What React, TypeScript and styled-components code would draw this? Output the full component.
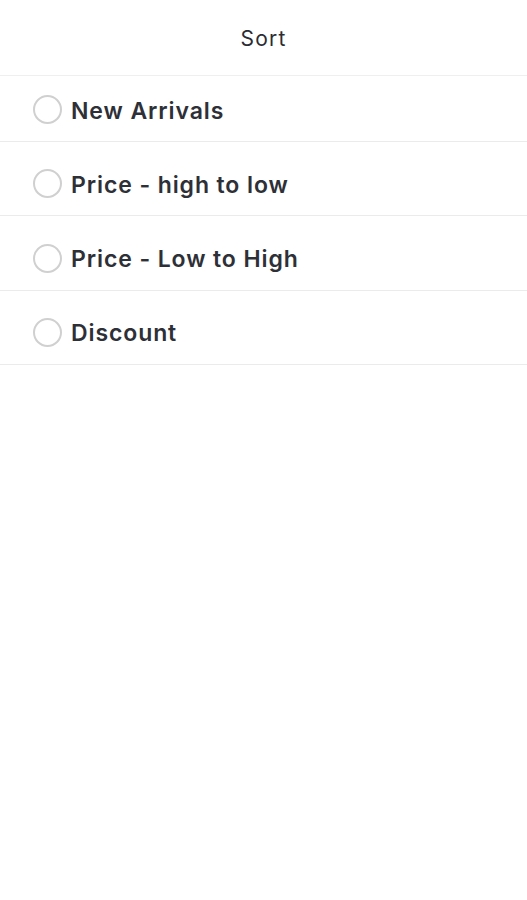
import styled, { createGlobalStyle } from "styled-components";
import { useState } from "react";

const GlobalStyle = createGlobalStyle`
  html, body {
    margin: 0;
    padding: 0;
    background: #fff;
  }
  body {
    font-family: Inter, "Noto Sans", sans-serif;
  }
`;

const Page = styled.div`
  width: 100%;
  min-height: 900px;
  background: #fff;
`;

const Header = styled.div`
  height: 75px;
  display: flex;
  align-items: center;
  justify-content: center;
  border-bottom: 1px solid #efefef;
`;

const Title = styled.h1`
  margin: 0;
  font-size: 21px;
  line-height: 1;
  font-weight: 400;
  color: #2a2c33;
  letter-spacing: 1.2px;
  padding-top: 2px;
`;

const List = styled.ul`
  list-style: none;
  margin: 0;
  padding: 0;
`;

const Row = styled.li`
  box-sizing: border-box;
  height: 74.4px;
  display: flex;
  align-items: center;
  gap: 9px;
  padding: 10px 0 0 33px;
  border-bottom: 1.5px solid #ebebeb;
  cursor: pointer;

  &:first-child {
    height: 66px;
    padding-top: 2px;
  }
`;

const Radio = styled.span<{ $checked: boolean }>`
  width: 25px;
  height: 25px;
  border-radius: 50%;
  border: 2px solid #d0d0d0;
  box-sizing: content-box;
  display: flex;
  align-items: center;
  justify-content: center;

  &::after {
    content: "";
    width: 13px;
    height: 13px;
    border-radius: 50%;
    background: ${(p) => (p.$checked ? "#2a2c33" : "transparent")};
  }
`;

const Label = styled.span`
  font-size: 23px;
  line-height: 1;
  font-weight: 600;
  color: #2e3037;
  letter-spacing: 0.9px;
  padding-top: 3px;
`;

const options = [
  "New Arrivals",
  "Price - high to low",
  "Price - Low to High",
  "Discount",
];

export default function App() {
  const [selected, setSelected] = useState<string | null>(null);

  return (
    <Page>
      <GlobalStyle />
      <Header>
        <Title>Sort</Title>
      </Header>
      <List>
        {options.map((opt) => (
          <Row key={opt} onClick={() => setSelected(opt)}>
            <Radio $checked={selected === opt} />
            <Label>{opt}</Label>
          </Row>
        ))}
      </List>
    </Page>
  );
}
